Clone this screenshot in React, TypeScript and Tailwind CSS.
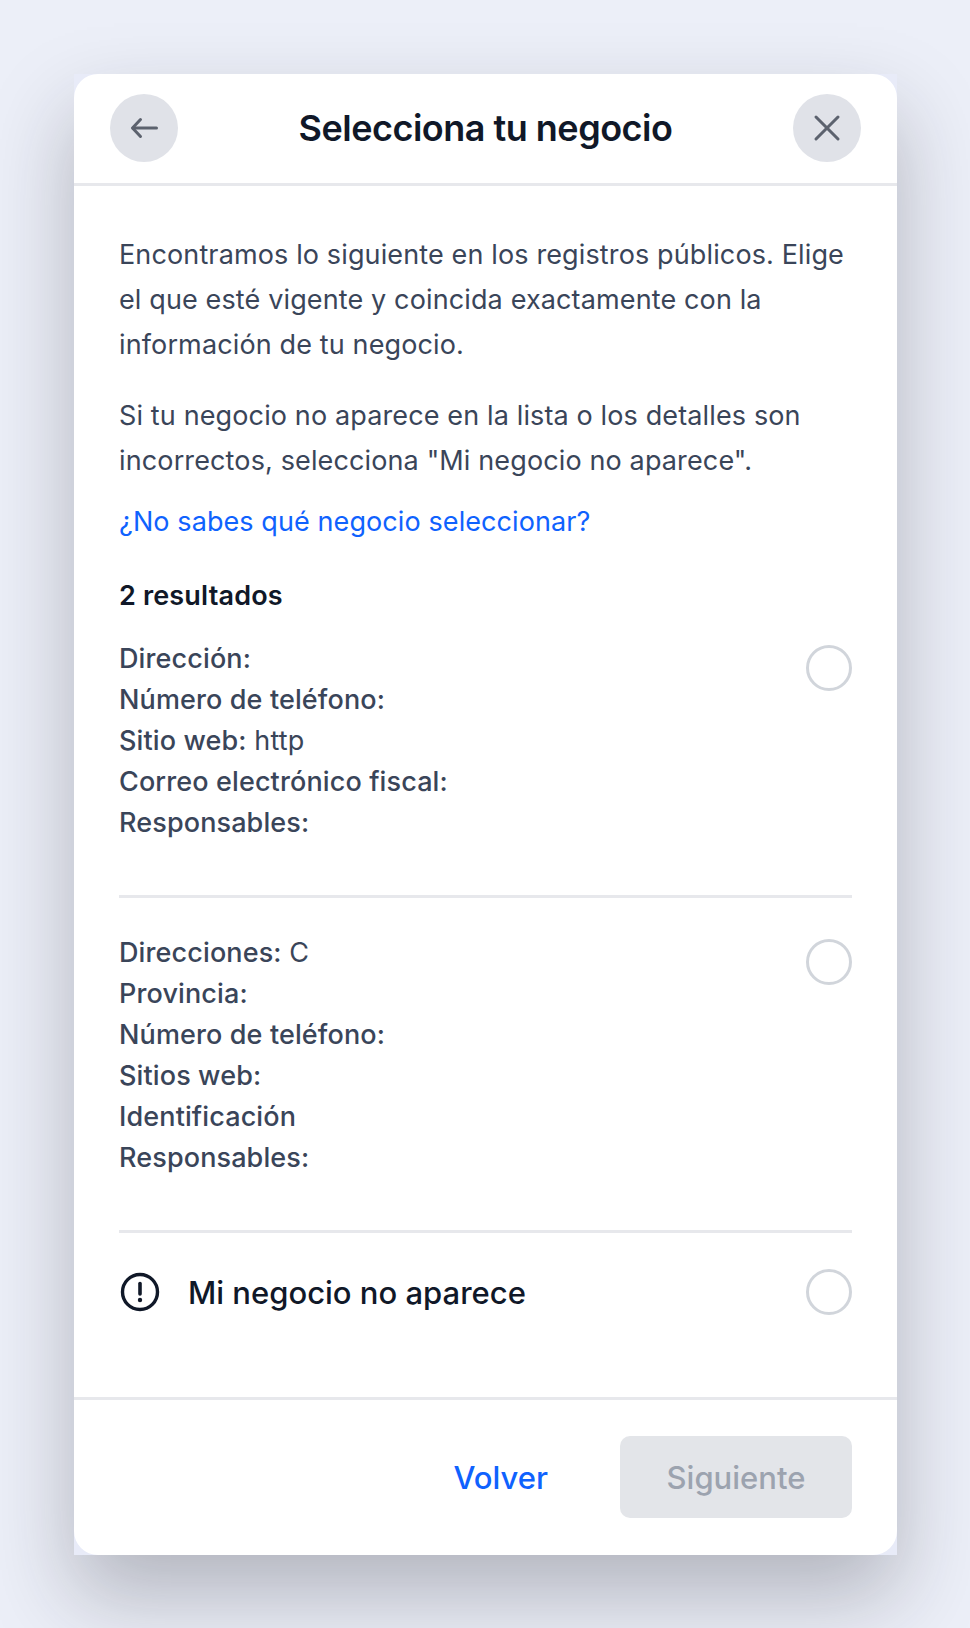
import React from "react";
import { X } from "lucide-react";

const Radio = () => (
  <div className="w-[46px] h-[46px] shrink-0 rounded-full border-[3px] border-[#d1d5db] bg-white" />
);

const Line = ({ label, value }: { label: string; value?: string }) => (
  <div>
    <span className="font-[450]">{label}</span>
    {value ? <span> {value}</span> : null}
  </div>
);

const ResultRow = ({ lines }: { lines: { label: string; value?: string }[] }) => (
  <div className="flex justify-between items-start">
    <div className="text-[27px] leading-[41px] text-[#3a4559] tracking-[0.12px]">
      {lines.map((line) => (
        <Line key={line.label} label={line.label} value={line.value} />
      ))}
    </div>
    <div className="mt-[7px]">
      <Radio />
    </div>
  </div>
);

export default function App() {
  return (
    <div
      className="w-[970px] h-[1628px] bg-[#eceff8] pt-[74px] pl-[74px] overflow-hidden"
      style={{ fontFamily: "Inter, sans-serif" }}
    >
      {/* square wrapper carries the shadow, corners show through */}
      <div className="w-[823px] h-[1481px] bg-[#e8ebf8] shadow-[0_40px_80px_rgba(30,30,40,0.28)]">
        <div className="h-full rounded-[24px] bg-white flex flex-col">
          {/* Header */}
          <div className="flex items-center justify-between px-[36px] h-[112px] pb-[1px] border-b-[3px] border-[#e7e8ec]">
            <button className="w-[68px] h-[68px] rounded-full bg-[#e0e2e8] flex items-center justify-center">
              <svg width="32" height="32" viewBox="0 0 32 32" fill="none" stroke="#5c626e" strokeWidth="3" strokeLinecap="round" strokeLinejoin="round">
                <path d="M28.5 16H5" />
                <path d="M12.5 7.5L4.5 16L12.5 24.5" />
              </svg>
            </button>
            <h1 className="text-[36px] font-semibold text-[#101828] tracking-[-0.5px]">
              Selecciona tu negocio
            </h1>
            <button className="w-[68px] h-[68px] rounded-full bg-[#e0e2e8] flex items-center justify-center text-[#5c626e]">
              <X size={44} strokeWidth={1.65} />
            </button>
          </div>

          {/* Body */}
          <div className="flex-1 px-[45px] pt-[46px]">
            <p className="text-[27px] leading-[45px] text-[#3a4559] tracking-[0.13px]">
              Encontramos lo siguiente en los registros públicos. Elige el que esté vigente y
              coincida exactamente con la información de tu negocio.
            </p>
            <p className="mt-[26px] text-[27px] leading-[45px] text-[#3a4559] tracking-[0.13px]">
              Si tu negocio no aparece en la lista o los detalles son incorrectos, selecciona
              "Mi negocio no aparece".
            </p>
            <a className="block mt-[18px] text-[27px] leading-[41px] text-[#0f62fe] tracking-[0.09px]">
              ¿No sabes qué negocio seleccionar?
            </a>
            <div className="mt-[33px] text-[27px] leading-[41px] font-semibold text-[#101828] tracking-[0.16px]">
              2 resultados
            </div>

            <div className="mt-[22px] pb-[52px] border-b-[3px] border-[#e7e8ec]">
              <ResultRow
                lines={[
                  { label: "Dirección:" },
                  { label: "Número de teléfono:" },
                  { label: "Sitio web:", value: "http" },
                  { label: "Correo electrónico fiscal:" },
                  { label: "Responsables:" },
                ]}
              />
            </div>

            <div className="mt-[34px] pb-[52px] border-b-[3px] border-[#e7e8ec]">
              <ResultRow
                lines={[
                  { label: "Direcciones:", value: "C" },
                  { label: "Provincia:" },
                  { label: "Número de teléfono:" },
                  { label: "Sitios web:" },
                  { label: "Identificación" },
                  { label: "Responsables:" },
                ]}
              />
            </div>

            <div className="mt-[35px] flex items-center justify-between">
              <div className="flex items-center gap-[28px]">
                <svg width="40" height="40" viewBox="0 0 40 40" fill="none" className="ml-[1px]">
                  <circle cx="20" cy="20" r="17.5" stroke="#101828" strokeWidth="3.4" />
                  <path d="M20 11.5v10.5" stroke="#101828" strokeWidth="3.6" strokeLinecap="round" />
                  <circle cx="20" cy="28" r="2.2" fill="#101828" />
                </svg>
                <span className="pt-[2px] text-[31px] font-medium text-[#101828]">
                  Mi negocio no aparece
                </span>
              </div>
              <Radio />
            </div>
          </div>

          {/* Footer */}
          <div className="h-[158px] border-t-[3px] border-[#e7e8ec] px-[45px] pt-[36px] flex justify-end gap-[72px]">
            <button className="h-[82px] pt-[2px] text-[31px] font-medium text-[#0f62fe]">Volver</button>
            <button className="w-[232px] h-[82px] pt-[2px] rounded-[10px] bg-[#e3e5e9] text-[31px] font-medium text-[#9ca3af]">
              Siguiente
            </button>
          </div>
        </div>
      </div>
    </div>
  );
}
